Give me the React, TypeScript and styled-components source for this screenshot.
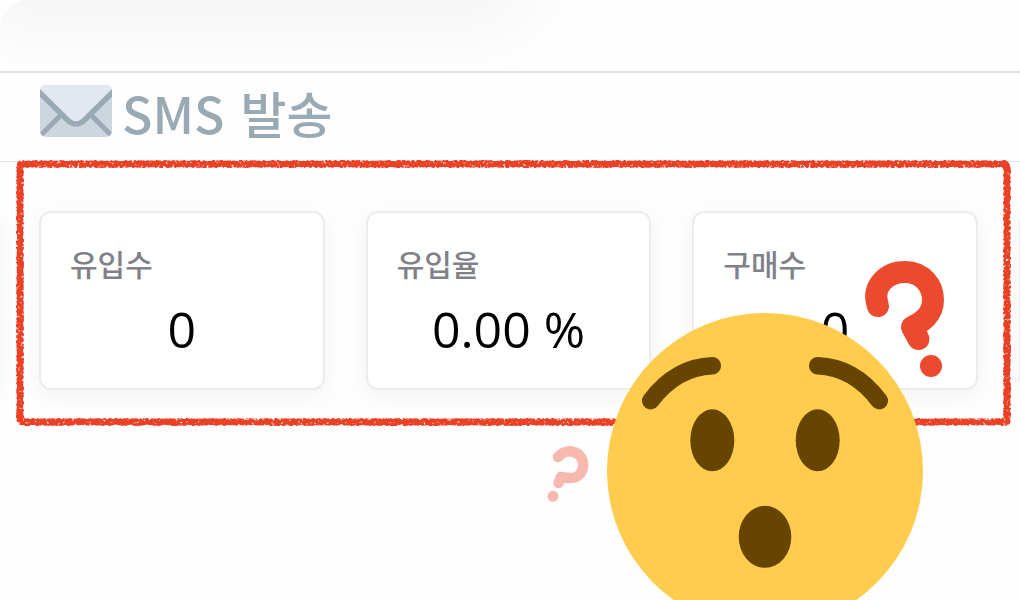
import React from "react";
import styled, { createGlobalStyle } from "styled-components";

const GlobalStyle = createGlobalStyle`
  * { box-sizing: border-box; }
  body {
    margin: 0;
    background: #fefefe;
    font-family: "Noto Sans CJK KR", sans-serif;
  }
`;

const Page = styled.main`
  position: relative;
  min-height: 100vh;
  overflow: hidden;
`;

const TopPanel = styled.div`
  position: relative;
  height: 73px;
  overflow: hidden;
  border-top-left-radius: 28px;
  border-bottom: 2px solid #e0e3ea;

  &::before {
    content: "";
    position: absolute;
    top: -40px;
    left: -20px;
    width: 540px;
    height: 40px;
    box-shadow: 0 0 90px 4px rgba(0, 0, 0, 0.09);
  }
`;

const Header = styled.header`
  display: flex;
  align-items: center;
  gap: 10px;
  height: 89px;
  padding: 0 40px 12px;
  border-bottom: 1px solid #e6e7e8;
`;

const Title = styled.h1`
  margin: 0;
  color: #9aaab4;
  font-size: 50px;
  font-weight: 500;
  line-height: 64px;
  padding-top: 2px;
  white-space: pre;
`;

const TitleWord = styled.span`
  margin-left: 5px;
`;

const Stats = styled.section`
  position: relative;
  display: grid;
  grid-template-columns: repeat(3, 1fr);
  gap: 41px;
  padding: 49px 42px 36px 39px;

  &::before,
  &::after {
    content: "";
    position: absolute;
    top: 49px;
    bottom: 36px;
    width: 40px;
    border-radius: 12px;
    border: 2px solid #ececec;
    box-shadow: 0 6px 24px rgba(0, 0, 0, 0.05);
  }

  &::before { right: 100%; }
  &::after { left: calc(100% - 1px); }
`;

const Card = styled.article`
  height: 179px;
  padding: 30px 29px;
  border: 2px solid #ececec;
  border-radius: 12px;
  background: #fff;
  box-shadow: 0 6px 24px rgba(0, 0, 0, 0.05);
`;

const Label = styled.h2`
  margin: 0;
  color: #808287;
  font-size: 30px;
  font-weight: 500;
  line-height: 40px;
`;

const Value = styled.p`
  margin: 12px 0 0;
  color: #000;
  font-family: "Open Sans", sans-serif;
  font-size: 50px;
  line-height: 68px;
  text-align: center;
`;

const CrayonFrame = styled.svg`
  position: absolute;
  top: -6px;
  left: 12px;
  width: calc(100% - 17px);
  height: calc(100% + 10px);

  rect {
    width: calc(100% - 16px);
    height: calc(100% - 16px);
  }
`;

const FaceArt = styled.svg`
  position: absolute;
  top: 255px;
  right: 70px;
`;

const Envelope = () => (
  <svg width="72" height="52" viewBox="0 0 72 52" aria-hidden="true">
    <clipPath id="envelope">
      <rect width="72" height="52" rx="6" />
    </clipPath>
    <g clipPath="url(#envelope)">
      <rect width="72" height="52" fill="#ccd6dd" />
      <path d="M22 29 3 48M50 29l19 19" stroke="#99aab5" strokeWidth="5" strokeLinecap="round" />
      <path
        d="M-4 4 28 35.500Q36 42.500 44 35.500L76 4V-8H-4Z"
        fill="#e1e8ef"
        stroke="#99aab5"
        strokeWidth="5.500"
      />
    </g>
  </svg>
);

const Frame = () => (
  <CrayonFrame aria-hidden="true">
    <filter
      id="crayon"
      filterUnits="userSpaceOnUse"
      x="0"
      y="0"
      width="100%"
      height="100%"
      colorInterpolationFilters="sRGB"
    >
      <feTurbulence type="fractalNoise" baseFrequency="0.35" numOctaves="2" seed="7" />
      <feColorMatrix values="0 0 0 0 0  0 0 0 0 0  0 0 0 0 0  1 0 0 0 0" result="grain" />
      <feGaussianBlur in="SourceAlpha" stdDeviation="1.3" result="soft" />
      <feComposite in="soft" in2="grain" operator="arithmetic" k1="5" k2="1.2" k3="0" k4="-2" result="mask" />
      <feFlood floodColor="#eb4024" />
      <feComposite in2="mask" operator="in" />
    </filter>
    <rect x="8" y="8" rx="1" fill="none" stroke="#eb4024" strokeWidth="8" filter="url(#crayon)" />
  </CrayonFrame>
);

const SurprisedFace = () => (
  <FaceArt width="410" height="380" viewBox="540 255 410 380" role="img" aria-label="Surprised face">
    <circle cx="765" cy="471" r="158" fill="#ffcc4d" />
    <g fill="#664500">
      <ellipse cx="712.300" cy="440.300" rx="22" ry="31" />
      <ellipse cx="817.700" cy="440.300" rx="22" ry="31" />
      <ellipse cx="765" cy="536.800" rx="26.300" ry="31" />
    </g>
    <g fill="none" stroke="#664500" strokeWidth="17.500" strokeLinecap="round">
      <path d="M712.300 365.700Q676 367 650.700 400.700" />
      <path d="M817.700 365.700Q854 367 879.300 400.700" />
    </g>
    <g fill="none" stroke="#eb4a2f" strokeWidth="22" strokeLinecap="round" strokeLinejoin="round">
      <path d="M878 306C871 286 887 272 905 272C922 272 933 285 933 300C933 315 922 322 912 327L918.500 339" />
    </g>
    <circle cx="931" cy="366" r="11" fill="#eb4a2f" />
    <g fill="none" stroke="#f7b8ae" strokeWidth="10.500" strokeLinecap="round" strokeLinejoin="round">
      <path d="M558 457C565 449 575 450 580 456C586 463 583 474 576 477C571 479 566 478 561 477L558.500 483" />
    </g>
    <circle cx="553" cy="496.300" r="5.500" fill="#f7b8ae" />
  </FaceArt>
);

const stats = [
  { label: "유입수", value: "0" },
  { label: "유입율", value: "0.00 %" },
  { label: "구매수", value: "0" },
];

export default function App() {
  return (
    <Page>
      <GlobalStyle />
      <TopPanel />
      <Header>
        <Envelope />
        <Title>
          SMS <TitleWord>발송</TitleWord>
        </Title>
      </Header>
      <Stats>
        {stats.map(({ label, value }) => (
          <Card key={label}>
            <Label>{label}</Label>
            <Value>{value}</Value>
          </Card>
        ))}
        <Frame />
      </Stats>
      <SurprisedFace />
    </Page>
  );
}
